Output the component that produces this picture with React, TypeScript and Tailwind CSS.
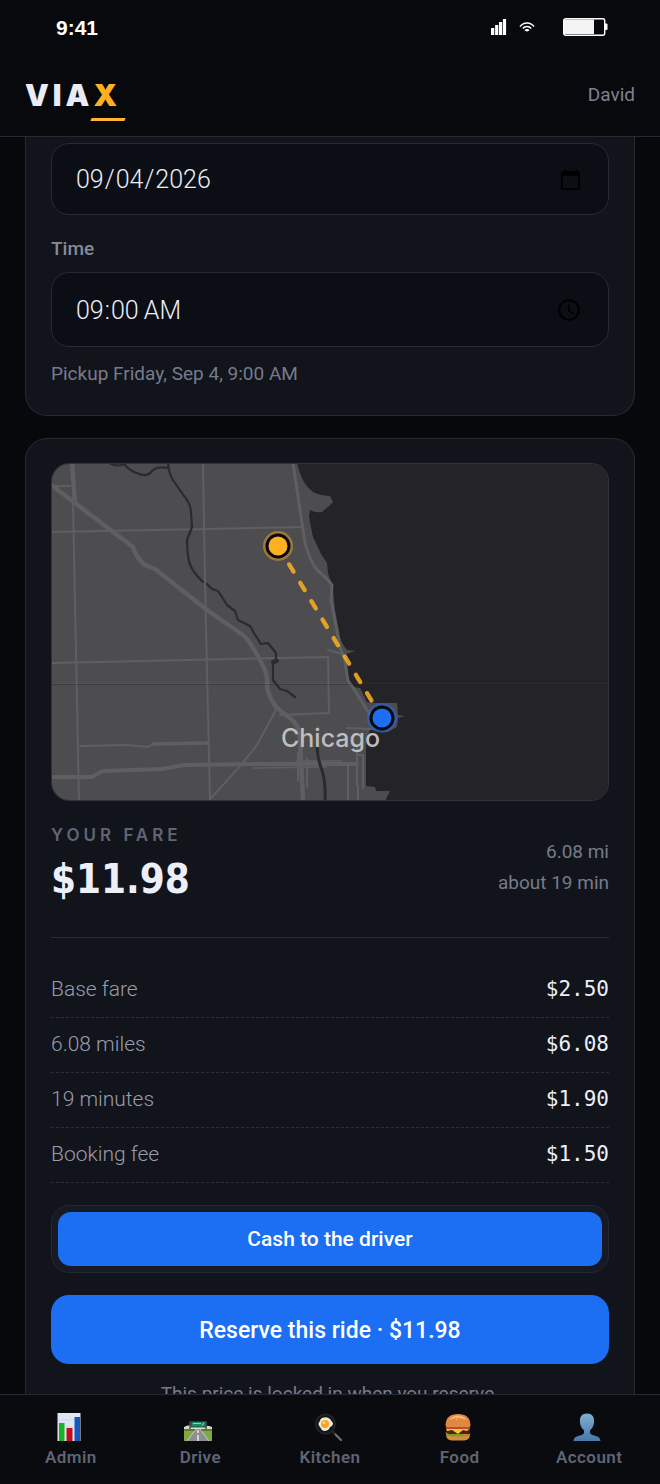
import { useState } from "react";
import type { ReactNode } from "react";

const fareLines = [
  { label: "Base fare", amount: "$2.50" },
  { label: "6.08 miles", amount: "$6.08" },
  { label: "19 minutes", amount: "$1.90" },
  { label: "Booking fee", amount: "$1.50" },
];

const StatusBar = () => (
  <div className="flex h-[54px] items-center justify-between pl-14 pr-[52px] text-white">
    <span className="pt-0.5 font-['Liberation_Sans',sans-serif] text-[21px] font-bold leading-6">9:41</span>
    <div className="flex items-center">
      <svg width="16" height="16" viewBox="0 0 16 16" fill="currentColor" aria-hidden="true">
        <path d="M0 9h3.3v7H0zM4.1 6h3.2v10H4.1zM8 3h3.2v13H8zM11.9 0h3.2v16h-3.2z" />
      </svg>
      <svg
        className="ml-3"
        width="16"
        height="12"
        viewBox="0 0 16 12"
        fill="none"
        stroke="currentColor"
        strokeWidth="1.5"
        aria-hidden="true"
      >
        <path d="M1 5.6C4.7.9 11.3.9 15 5.6M3.8 7.6c2.3-2.8 6.1-2.8 8.4 0" />
        <path d="M5.5 9.4c1.2-1.800 3.800-1.800 5 0L8 10.400z" fill="currentColor" stroke="none" />
      </svg>
      <svg className="ml-7" width="45" height="18" viewBox="0 0 45 18" aria-hidden="true">
        <rect x="0.700" y="0.700" width="41" height="16.600" rx="2" fill="none" stroke="currentColor" strokeWidth="1.4" />
        <rect x="1" y="1.500" width="30" height="14.500" fill="#f4f4f4" />
        <path d="M42 5.500h1.500q1 0 1 1v4.500q0 1-1 1H42z" fill="currentColor" />
      </svg>
    </div>
  </div>
);

const Header = () => (
  <header className="shrink-0 border-b border-[#262a33] bg-[#08090c]">
    <StatusBar />
    <div className="flex h-[82px] items-center justify-between px-[25px]">
      <a
        href="#home"
        className="font-['Inter',sans-serif] text-[30px] font-black leading-8 tracking-[4px] text-[#e9ecf6]"
      >
        VIA
        <span className="relative text-[#ffb020]">
          X
          <span className="absolute -bottom-2 -left-0.5 h-[3px] w-[34px] -skew-x-[24deg] bg-[#ffb32e]" />
        </span>
      </a>
      <a href="#account" className="text-[19px] leading-6 text-[#7d8192]">
        David
      </a>
    </div>
  </header>
);

const RouteMap = () => (
  <div className="overflow-hidden rounded-[18px] border border-[#303239] bg-[#242327]">
    <svg className="block w-full" viewBox="1 1 556 336" role="img" aria-label="Route map">
      <rect width="558" height="338" fill="#242327" />
      <path
        fill="#4d4d4f"
        d="M0 0H246L248 7Q252 22 262 29Q270 33 279 33L282 39L278 43L271 49Q264 50 259 47L258 54L262 74L270 91L276 100L277 110L282 127L284 147L289 174L291 180L296 187L304 188L295 191L295 203L297 217L302 224L309 225L316 239L324 240H346L347 252L354 253L347 255L346 264L336 269L319 267L315 278V323L324 324L325 328H339L334 338H0Z"
      />
      <g fill="none" stroke="#5f5f61" strokeLinecap="round" strokeLinejoin="round">
        <g strokeWidth="2">
          <path d="M22 40L28 338M152 0L154 120L159 338M0 69L251 64M0 200L277 194L278 250L229 252M277 187L291 191" />
          <path d="M29 283L76 282L97 284L102 281L157 280M226 245Q218 260 207 280Q195 298 159 336" />
          <path d="M296 265L320 266M306 285V323M306 292H312V325M297 302V337M307 323V337" />
          <path d="M242 0L250 54L254 80Q258 96 266 107Q277 116 281 122L280 137L289 184L294 198L297 218L303 226L319 252" strokeWidth="3" />
        </g>
        <g strokeWidth="4">
          <path d="M21 0L24 40M0 22L24 40L82 84Q86 96 94 102L104 106L156 147L192 172Q199 177 214 207Q217 216 216 224Q219 237 226 245L240 256Q248 262 249 275L252 338" strokeWidth="4.500" />
          <path d="M2 23H19M247 290V318M256 296V324" strokeWidth="2" />
          <path d="M0 314H41L52 308L111 306L134 302L212 301L306 301" />
          <path d="M202 305L275 304M246 298H291" strokeWidth="1.500" />
          <path d="M102 281L157 280" strokeWidth="3.500" />
        </g>
      </g>
      <g fill="none" stroke="#2b2b2d" strokeWidth="2.200" strokeLinecap="round" strokeLinejoin="round">
        <path d="M60 1Q68 4 73 1Q80 9 86 10Q96 15 101 8Q106 3 117 5" />
        <path d="M117 0Q118 11 122 17L133 33Q139 39 140 49L141 64L136 77Q136 89 138 99Q142 110 152 119M156 121L161 126L167 128L171 134L176 142L184 148L187 157L199 163L203 170L210 181L217 180L225 190L225 198L222 201L222 217L229 226L236 228L244 234" />
        <path d="M266 284Q267 298 271 307Q275 321 274 338" strokeWidth="3" />
        <path d="M222 199L226 198" strokeWidth="4" />
      </g>
      <path d="M0 221.500H558" stroke="#18181a" strokeOpacity=".25" />
      <path d="M0 220.500H558" stroke="#ffffff" strokeOpacity=".04" />
      <text x="230" y="284" className="font-['Inter',sans-serif]" fontSize="25" fontWeight="500" fill="#bebebf">
        Chicago
      </text>
      <path
        d="M227 83L331 255"
        fill="none"
        stroke="#ffb020"
        strokeOpacity=".85"
        strokeWidth="4.300"
        strokeLinecap="round"
        strokeDasharray="8.500 13"
      />
      <circle cx="227" cy="83" r="15" fill="#ffb020" fillOpacity=".45" />
      <circle cx="227" cy="83" r="12.500" fill="#05060a" />
      <circle cx="227" cy="83" r="9.500" fill="#ffb020" />
      <circle cx="331" cy="255" r="15" fill="#1c6ef2" fillOpacity=".5" />
      <circle cx="331" cy="255" r="12.500" fill="#05060a" />
      <circle cx="331" cy="255" r="9.500" fill="#1c6ef2" />
    </svg>
  </div>
);

const ChartIcon = () => (
  <svg width="28" height="28" viewBox="0 0 28 28" aria-hidden="true">
    <path d="M2.500 0h23v28h-23z" fill="#dfe6f1" />
    <path d="M3 7h22M3 14h22M3 21h22" stroke="#c5cfdf" strokeWidth=".6" />
    <path d="M4 10h5.500v18H4z" fill="#18b424" />
    <path d="M11.500 15h6v13h-6z" fill="#bd1118" />
    <path d="M19.500 4H25v24h-5.500z" fill="#1557bb" />
  </svg>
);

const RoadIcon = () => (
  <svg width="28" height="28" viewBox="0 0 28 28" aria-hidden="true">
    <path d="M0 14q5-3 9-1h10q5-1 9 1v4H0z" fill="#ded9c4" />
    <path d="M0 16h28v12H0z" fill="#7faa43" />
    <path d="M12 16h4l9 12H3z" fill="#8d9093" />
    <path d="M12 16L3 28M16 16l9 12" stroke="#c9cbc5" strokeWidth="1" />
    <path d="M14 17v3M14 22v6" stroke="#fff" strokeWidth="1.200" />
    <path d="M0 17h11M17 17h11" stroke="#3e4a33" strokeWidth="1" />
    <path d="M6 8v8M22 8v8" stroke="#474b4f" strokeWidth="1.500" />
    <path d="M7 8.500h15v5.500H7z" fill="#1e8a61" stroke="#253a36" strokeWidth=".8" />
    <path d="M9 10.500h8M18 12.500l2-3" stroke="#9bddbe" strokeWidth=".9" />
  </svg>
);

const PanIcon = () => (
  <svg width="28" height="28" viewBox="0 0 28 28" aria-hidden="true">
    <path d="M18 18L27 27" stroke="#77746f" strokeWidth="2" strokeLinecap="round" />
    <path d="M17 17l4 4" stroke="#252525" strokeWidth="2.500" />
    <circle cx="11.500" cy="11" r="10.500" fill="#222324" />
    <circle cx="11.500" cy="11" r="8.700" fill="#141516" />
    <path d="M8 5q5-2 8 1l3 4q0 3-3 4-1 4-6 4-3-1-4-4-3-3 0-6 0-2 2-3z" fill="#f1ead8" />
    <circle cx="11" cy="11" r="4" fill="#f2a527" />
    <circle cx="10" cy="9.700" r="1.400" fill="#ffd979" />
  </svg>
);

const BurgerIcon = () => (
  <svg width="28" height="28" viewBox="0 0 28 28" aria-hidden="true">
    <path d="M2 21h24q0 6-6 6.500H8Q2 27 2 21z" fill="#d98b3c" />
    <path d="M1.500 19q4 2 8 1.500t9 1 8-1.500q0 3-4 3l-7 .5-9-.5q-5 0-5-4z" fill="#6f9f2d" />
    <path d="M2 16h24q1 4-3 5H5q-4-1-3-5z" fill="#472318" />
    <path d="M2 15h24l-3 3-4-1-5 4-6-4-5 1z" fill="#ffc132" />
    <path d="M2 13h24v3H2z" fill="#c4492c" />
    <path d="M1.500 12Q2 1 14 1t12.500 11q0 2-2 2h-21q-2 0-2-2z" fill="#df8842" />
    <path d="M5 7Q8 2.500 14 2.500T23 7q-5-2-9-2T5 7z" fill="#f5b573" />
    <path d="M9 4.500h1M13 3.800h1M17 5h1M12 6.500h1" stroke="#ffe0ac" strokeWidth=".8" />
  </svg>
);

const PersonIcon = () => (
  <svg width="28" height="28" viewBox="0 0 28 28" aria-hidden="true">
    <defs>
      <linearGradient id="person" x1="0" y1="0" x2="0" y2="1">
        <stop stopColor="#80aed3" />
        <stop offset="1" stopColor="#477aaa" />
      </linearGradient>
    </defs>
    <path
      d="M14 .5c5 0 7.300 3.200 7.100 8-.1 4-1.800 6.800-4.100 8.800v2.200c0 2 2.500 2.500 5 3.200 3.500 1 5.200 2 5.500 5.300H.5c.3-3.300 2-4.300 5.500-5.300 2.500-.7 5-1.200 5-3.200v-2.200C8.700 15.300 7 12.500 6.900 8.500 6.700 3.700 9 .5 14 .5z"
      fill="url(#person)"
    />
  </svg>
);

const navItems: { label: string; icon: ReactNode }[] = [
  { label: "Admin", icon: <ChartIcon /> },
  { label: "Drive", icon: <RoadIcon /> },
  { label: "Kitchen", icon: <PanIcon /> },
  { label: "Food", icon: <BurgerIcon /> },
  { label: "Account", icon: <PersonIcon /> },
];

const BottomNav = () => (
  <nav className="grid h-[90px] shrink-0 grid-cols-5 border-t border-[#262a33] bg-[#090b0e] px-1.5 pt-[18px]">
    {navItems.map((item) => (
      <a
        key={item.label}
        href={`#${item.label.toLowerCase()}`}
        className="flex flex-col items-center gap-1 text-[17px] font-semibold leading-6 tracking-wide text-[#5f6474]"
      >
        <span className="mr-1">{item.icon}</span>
        {item.label}
      </a>
    ))}
  </nav>
);

export default function App() {
  const [date, setDate] = useState("2026-09-04");
  const [time, setTime] = useState("09:00");

  return (
    <div className="flex h-screen flex-col bg-[#07080c] font-['Roboto',sans-serif] text-[#eceff8]">
      <Header />

      <main className="flex-1 overflow-hidden px-[25px]">
        {/* Pickup time */}
        <section className="rounded-b-[22px] border-x border-b border-[#262a33] bg-[#11141b] px-[25px] pb-[26px] pt-1.5">
          <input
            type="date"
            aria-label="Date"
            value={date}
            onChange={(e) => setDate(e.target.value)}
            className="block h-[72px] w-full rounded-[18px] border border-[#282b33] bg-[#0b0e15] px-[23px] pt-0.5 text-[25px] font-light outline-none"
          />
          <label htmlFor="time" className="mt-5 block text-[19px] font-medium leading-7 text-[#858a9b]">
            Time
          </label>
          <input
            id="time"
            type="time"
            value={time}
            onChange={(e) => setTime(e.target.value)}
            className="mt-[9px] block h-[75px] w-full rounded-[18px] border border-[#282b33] bg-[#0b0e15] px-[23px] pt-0.5 text-[25px] font-light outline-none"
          />
          <p className="mt-3 text-[19px] leading-[30px] text-[#767b8b]">Pickup Friday, Sep 4, 9:00 AM</p>
        </section>

        {/* Route and fare */}
        <section className="mt-[22px] rounded-[22px] border border-[#262a33] bg-[#11141b] px-[25px] pb-8 pt-6">
          <RouteMap />

          <div className="flex items-center justify-between border-b border-[#282c35] pb-[31px] pt-[22px]">
            <div>
              <h2 className="font-['Inter',sans-serif] text-[17px] font-semibold leading-6 tracking-[4px] text-[#606575]">
                YOUR FARE
              </h2>
              <p className="mt-[5px] font-['DejaVu_Sans_Condensed','DejaVu_Sans',sans-serif] text-[40px] font-bold leading-[54px]">
                $11.98
              </p>
            </div>
            <p className="pt-1 text-right text-[19px] leading-[31px] text-[#767b8b]">
              6.08 mi
              <br />
              about 19 min
            </p>
          </div>

          <dl className="pt-[25px]">
            {fareLines.map((line) => (
              <div
                key={line.label}
                className="flex h-[55px] items-center justify-between border-b border-dashed border-[#2b2f38]"
              >
                <dt className="text-[21px] font-light text-[#989dac]">{line.label}</dt>
                <dd className="font-['DejaVu_Sans_Mono',monospace] text-[21px]">{line.amount}</dd>
              </div>
            ))}
          </dl>

          <div className="mt-[22px] rounded-[18px] border border-[#242832] bg-[#171a24] p-1.5">
            <button type="button" className="block h-[54px] w-full rounded-[13px] bg-[#1c6ef2] pt-0.5 text-[21px] font-medium text-white">
              Cash to the driver
            </button>
          </div>
          <button type="button" className="mt-[22px] block h-[69px] w-full rounded-[18px] bg-[#1c6ef2] pt-1 text-[23px] font-medium text-white">
            Reserve this ride · $11.98
          </button>
          <p className="mt-4 text-center text-[19px] leading-7 text-[#767b8b]">
            This price is locked in when you reserve.
          </p>
        </section>
      </main>

      <BottomNav />
    </div>
  );
}
